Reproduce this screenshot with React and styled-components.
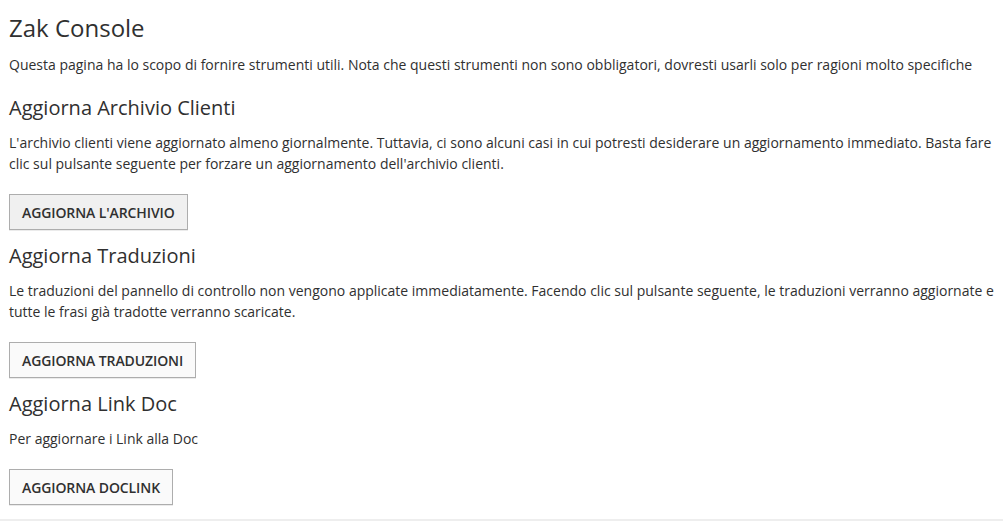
import React from 'react';
import styled, { createGlobalStyle } from 'styled-components';

const GlobalStyle = createGlobalStyle`
    body {
        margin: 0;
        background: #ffffff;
        font-family: "Open Sans", "Liberation Sans", sans-serif;
        color: #303030;
    }
`;

const Page = styled.div`
    width: 1003px;
    padding: 0 0 14px 9px;
    box-sizing: border-box;
    border-bottom: 2px solid #eeeeee;
`;

const Title = styled.h1`
    margin: 0;
    padding-top: 12px;
    font-size: 24px;
    font-weight: 400;
    line-height: 32px;
    color: #303030;
`;

const Intro = styled.p`
    margin: 10px 0 0;
    font-size: 14px;
    line-height: 21px;
`;

const Section = styled.section`
    margin-top: ${props => props.first ? '19px' : '12px'};
`;

const SectionTitle = styled.h2`
    margin: 0;
    font-size: 20px;
    font-weight: 400;
    line-height: 28px;
    color: #303030;
`;

const Text = styled.p`
    margin: 10px 0 0;
    font-size: 14px;
    line-height: 21px;
`;

const Button = styled.button`
    display: block;
    margin-top: 20px;
    height: 36px;
    padding: 0 12px;
    font-family: "Open Sans", "Liberation Sans", sans-serif;
    font-size: 14px;
    font-weight: 600;
    letter-spacing: -0.1px;
    text-transform: uppercase;
    color: #303030;
    background: ${props => props.active ? '#f0f0f0' : '#fafafa'};
    border: 1px solid #adadad;
    border-radius: 0;
    box-shadow: 0 1px 0 rgba(0, 0, 0, 0.08);
    cursor: pointer;
`;

const sections = [
    {
        title: 'Aggiorna Archivio Clienti',
        text: "L'archivio clienti viene aggiornato almeno giornalmente. Tuttavia, ci sono alcuni casi in cui potresti desiderare un aggiornamento immediato. Basta fare clic sul pulsante seguente per forzare un aggiornamento dell'archivio clienti.",
        button: "Aggiorna l'archivio",
        active: true
    },
    {
        title: 'Aggiorna Traduzioni',
        text: 'Le traduzioni del pannello di controllo non vengono applicate immediatamente. Facendo clic sul pulsante seguente, le traduzioni verranno aggiornate e tutte le frasi già tradotte verranno scaricate.',
        button: 'Aggiorna traduzioni'
    },
    {
        title: 'Aggiorna Link Doc',
        text: 'Per aggiornare i Link alla Doc',
        button: 'Aggiorna DocLink'
    }
];

export default function App() {
    return <Page>
             <GlobalStyle/>
             <Title>Zak Console</Title>
             <Intro>Questa pagina ha lo scopo di fornire strumenti utili. Nota che questi strumenti non sono obbligatori, dovresti usarli solo per ragioni molto specifiche</Intro>
             {
                 sections.map((s, i) =>
                     <Section key={s.title} first={i === 0}>
                       <SectionTitle>{s.title}</SectionTitle>
                       <Text>{s.text}</Text>
                       <Button active={s.active}>{s.button}</Button>
                     </Section>
                 )
             }
           </Page>;
}
